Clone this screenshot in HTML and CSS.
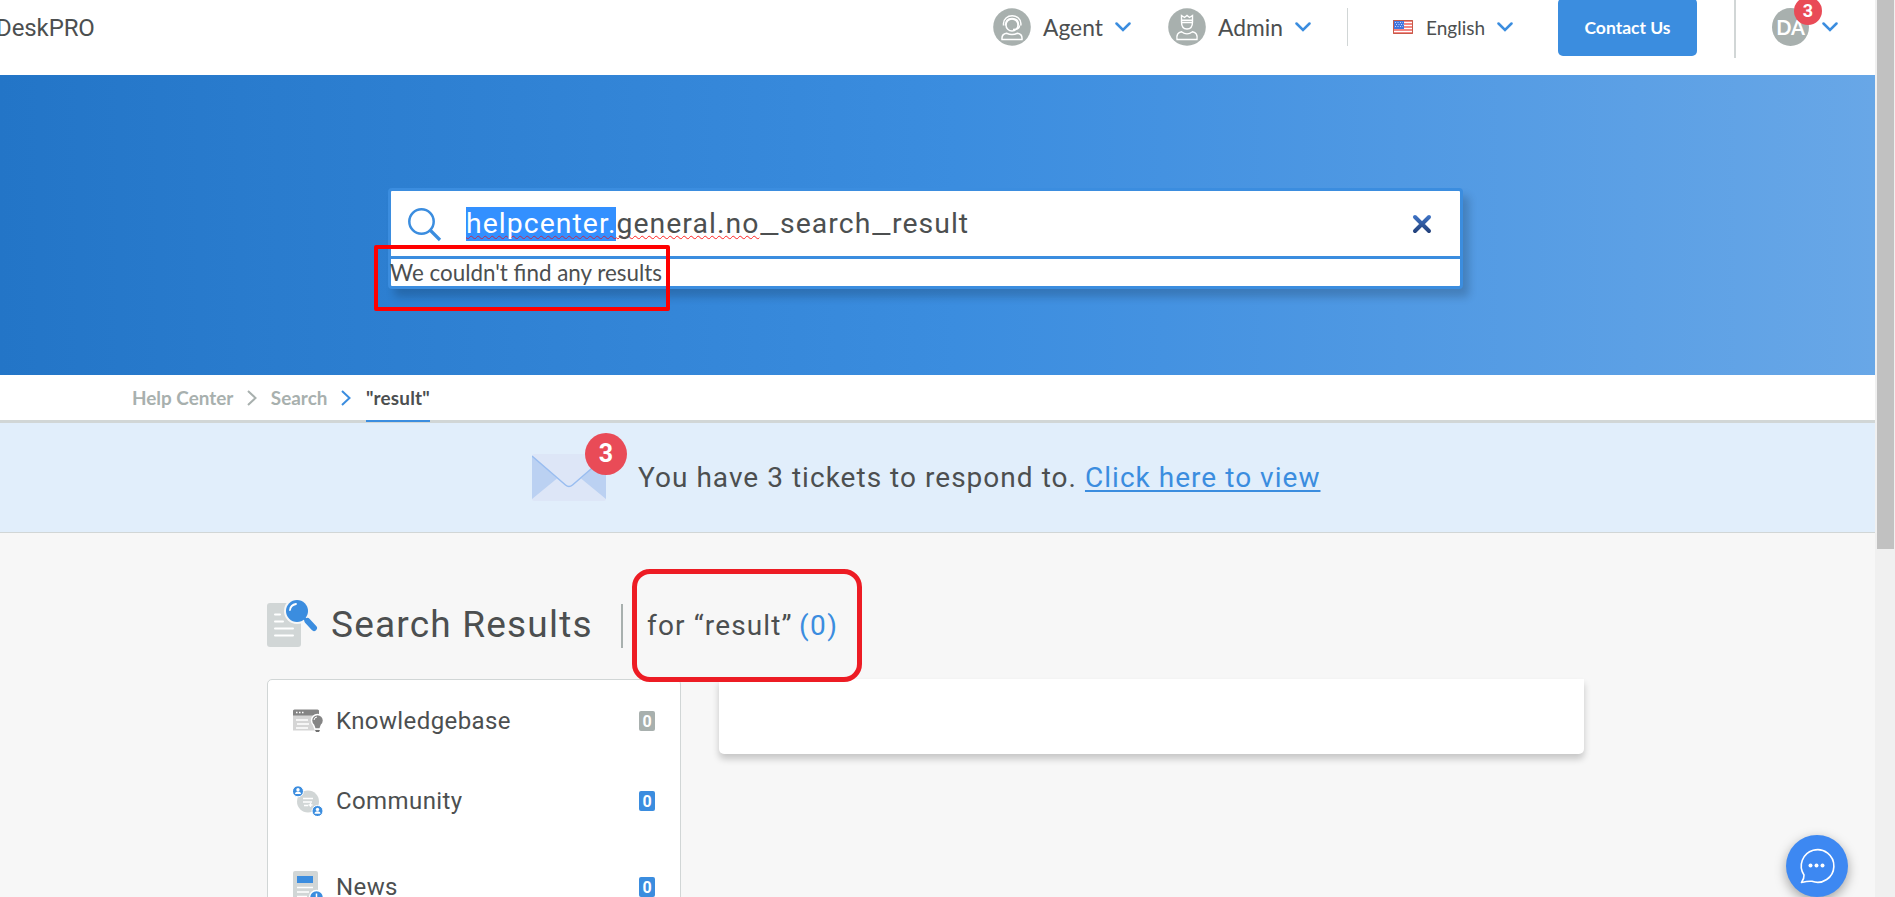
FILE: index.html
```html
<!DOCTYPE html>
<html lang="en">
<head>
<meta charset="utf-8">
<title>DeskPRO Help Center</title>
<link rel="stylesheet" href="styles.css">
</head>
<body>
<div class="page">
  <header class="header">
    <div class="brand">DeskPRO</div>
    <nav class="nav">
      <div class="nav-item agent">
        <svg class="avatar" viewBox="0 0 38 38"><circle cx="19" cy="19" r="18.8" fill="#a8b0ae"/><g fill="none" stroke="#fff" stroke-width="1.500"><circle cx="19" cy="17" r="6"/><path d="M10.500 17.500v-2a8.700 7.700 0 0 1 17.400 0v2M12.500 17.500q0-7 6.500-7t6.500 7M26.500 17.500q0 4-6.500 4"/><path d="M9 31.500q-.5-5.500 4.500-6.200q5.500 2.500 11 0q5 .7 4.500 6.200z"/></g></svg>
        <span>Agent</span>
        <svg class="chev" viewBox="0 0 16 10"><path d="M1.500 1.500L8 8L14.500 1.500"/></svg>
      </div>
      <div class="nav-item admin">
        <svg class="avatar" viewBox="0 0 38 38"><circle cx="19" cy="19" r="18.8" fill="#a8b0ae"/><g fill="none" stroke="#fff" stroke-width="1.400"><path d="M13.500 7.500V14q0 7 5.500 7t5.500-7V7.500l-3 2l-2.500-2l-2.500 2zM13.500 12.200h11M13.500 14.500h11"/><path d="M9 31.500q-1-6.800 4.500-7.700q5.500 4.200 11 0q5.500.9 4.500 7.700z"/></g></svg>
        <span>Admin</span>
        <svg class="chev" viewBox="0 0 16 10"><path d="M1.500 1.500L8 8L14.500 1.500"/></svg>
      </div>
      <div class="rule short"></div>
      <div class="nav-item lang">
        <svg class="flag" viewBox="0 0 20 14"><path fill="#fff" d="M0 0h20v14H0z"/><path stroke="#f0605c" stroke-width="1.500" d="M0 1h20M0 4h20M0 7h20M0 10h20M0 13h20"/><path fill="#4276df" d="M0 0h11v9H0z"/><path stroke="#c5d6fb" stroke-dasharray="1 1.500" d="M2 2.500h8M3 4.500h8M2 6.500h8"/><path fill="none" stroke="#c65b49" d="M.5.5h19v13H.5z"/></svg>
        <span>English</span>
        <svg class="chev" viewBox="0 0 16 10"><path d="M1.500 1.500L8 8L14.500 1.500"/></svg>
      </div>
      <div class="contact">Contact Us</div>
      <div class="rule tall"></div>
      <div class="user">
        <div class="initials">DA<span class="badge">3</span></div>
        <svg class="chev" viewBox="0 0 16 10"><path d="M1.500 1.500L8 8L14.500 1.500"/></svg>
      </div>
    </nav>
  </header>

  <section class="hero">
    <div class="search">
      <div class="search-row">
        <svg class="lens" viewBox="0 0 36 36"><g fill="none" stroke="#3b8ddf" stroke-width="2.500"><circle cx="14.500" cy="14.500" r="12.200"/><path stroke-width="3.200" d="M23.500 23.500L33 33"/></g></svg>
        <div class="query"><span class="typo"><span class="sel">helpcenter.</span>general.no</span><span class="under">_</span>search<span class="under">_</span>result</div>
        <svg class="clear" viewBox="0 0 20 20"><defs><linearGradient id="cg" gradientUnits="userSpaceOnUse" x1="0" y1="0" x2="0" y2="20"><stop offset="0" stop-color="#4178cc"/><stop offset="1" stop-color="#203c74"/></linearGradient></defs><path d="M3 3L17 17M17 3L3 17" stroke="url(#cg)" stroke-width="4" stroke-linecap="round"/></svg>
      </div>
      <div class="message">We couldn't find any results</div>
      <div class="mark-box"></div>
    </div>
  </section>

  <nav class="crumbs">
    <span>Help Center</span>
    <svg viewBox="0 0 10 16"><path d="M1 1L8.500 8L1 15" stroke="#a8b0ae"/></svg>
    <span>Search</span>
    <svg viewBox="0 0 10 16"><path d="M1 1L8.500 8L1 15" stroke="#3b8ddf"/></svg>
    <span class="current">"result"</span>
  </nav>

  <section class="alert">
    <div class="mail">
      <svg viewBox="0 0 74 47"><rect width="74" height="47" rx="2" fill="#dde6f7"/><path fill="#bbd1f2" d="M0 2L25 24.500L0 45zM74 2L49 24.500L74 45z"/><path fill="none" stroke="#99bdf0" stroke-width="1.500" d="M0 2L33.500 31Q37 34 40.500 31L74 2"/></svg>
      <span class="badge big">3</span>
    </div>
    <div class="alert-text">You have 3 tickets to respond to. <a>Click here to view</a></div>
  </section>

  <main class="main">
    <div class="title">
      <svg class="title-icon" viewBox="0 0 51 48"><rect y="3" width="34" height="44" rx="3" fill="#d1d6d6"/><path stroke="#fff" stroke-width="2" stroke-linecap="round" d="M8 14.500h5M8 21.500h8M8 28.500h18M8 35.500h18"/><circle cx="30" cy="11" r="13" fill="#f7f7f7"/><path stroke="#3b8ddf" stroke-width="3" d="M35 16L41 22"/><path stroke="#3b8ddf" stroke-width="6" stroke-linecap="round" d="M40.500 21L47 28"/><circle cx="30" cy="11" r="11" fill="#3b8ddf"/><path fill="none" stroke="#fff" stroke-width="1.800" stroke-linecap="round" d="M23 10Q23.500 5 29 4"/></svg>
      <h1>Search Results</h1>
      <div class="title-rule"></div>
      <div class="for"><span class="term">for “result”</span><span class="num">(0)</span><div class="mark-round"></div></div>
    </div>
    <div class="columns">
      <aside class="side">
        <div class="row kb">
          <svg viewBox="0 0 30 30"><path fill="#d5d5d5" d="M0 4h26v20.500H0z"/><path fill="#858585" d="M1.500 3.500h23Q26 3.500 26 5v4.500H0V5q0-1.500 1.500-1.500z"/><path stroke="#fff" stroke-width="1.500" stroke-dasharray="1.500 1.500" d="M3 6.500h8"/><path stroke="#fff" stroke-width="1.400" d="M3 14h12M4 18h12M3 22h12"/><path fill="#858585" stroke="#fff" stroke-width="1.500" d="M24.500 8.500a6 6 0 0 1 6 6q0 2.500-2 4.500l-1.500 4h-5l-1.500-4q-2-2-2-4.500a6 6 0 0 1 6-6z"/><path fill="#707070" d="M22 24h5l-1 2h-3z"/><path stroke="#fff" fill="none" d="M21 14q.5-3 3-3"/></svg>
          <span class="label">Knowledgebase</span><span class="count gray">0</span>
        </div>
        <div class="row com">
          <svg viewBox="0 0 30 30"><circle cx="15" cy="15.500" r="11" fill="#d1d6d6"/><path stroke="#fff" stroke-width="1.300" d="M10 12.500h10M10 16h9M11 19.500h4M15.500 19h4M17.500 17v4"/><circle cx="5" cy="5.300" r="5.500" fill="#3b8ddf" stroke="#fff"/><circle cx="24.500" cy="25" r="5.500" fill="#3b8ddf" stroke="#fff"/><g fill="#fff"><circle cx="5" cy="3.700" r="1.700"/><path d="M2 8q0-2.500 3-2.500t3 2.500z"/><circle cx="24.500" cy="23.400" r="1.700"/><path d="M21.500 27.700q0-2.500 3-2.500t3 2.500z"/></g></svg>
          <span class="label">Community</span><span class="count">0</span>
        </div>
        <div class="row news">
          <svg viewBox="0 0 30 36"><rect width="25" height="35" rx="2" fill="#d1d6d6"/><path fill="#3b8ddf" d="M4 5h16v7H4z"/><path stroke="#fff" stroke-width="1.600" d="M4 16.500h16M4 21h12M4 25.500h10"/><circle cx="23.500" cy="26.500" r="7" fill="#3b8ddf" stroke="#fff" stroke-width="1.500"/><path stroke="#fff" stroke-width="1.500" d="M23.500 22.500v5"/></svg>
          <span class="label">News</span><span class="count">0</span>
        </div>
      </aside>
      <section class="card"></section>
    </div>
  </main>

  <div class="chat">
    <svg viewBox="0 0 62 62"><path fill="none" stroke="#fff" stroke-width="1.600" stroke-linejoin="round" d="M18 40A16.300 16.300 0 1 1 26 46.300Q22.500 45.800 15.500 47.500Q18.300 43.500 18 40z"/><g fill="#fff"><circle cx="24.500" cy="30.500" r="2"/><circle cx="30.500" cy="30.500" r="2"/><circle cx="36.500" cy="30.500" r="2"/></g></svg>
  </div>
</div>
<div class="scrollbar"><div class="thumb"></div></div>
</body>
</html>
```
FILE: styles.css
```css
* { box-sizing: border-box; }
html { overflow: hidden; }
body {
  margin: 0;
  width: 1895px;
  height: 897px;
  display: flex;
  overflow: hidden;
  background: #f7f7f7;
  color: #4c4f50;
  font-family: Roboto, sans-serif;
}
svg { display: block; flex: none; }
.page { position: relative; width: 1875px; height: 897px; overflow: hidden; flex: none; white-space: nowrap; }
.scrollbar { width: 20px; height: 897px; background: #f0f0f0; padding: 0 1px 0 2px; }
.thumb { height: 549px; background: #c1c1c1; }

.header { height: 75px; background: #fff; display: flex; justify-content: space-between; }
.brand { height: 56px; line-height: 56px; font-size: 24px; letter-spacing: -0.1px; margin-left: -4px; }
.nav { height: 54px; display: flex; align-items: center; font-family: Lato, sans-serif; font-size: 22.8px; }
.nav-item { display: flex; align-items: center; }
.avatar { width: 38px; height: 38px; margin-right: 12px; }
.chev { width: 16px; height: 10px; margin-left: auto; }
.chev path { fill: none; stroke: #3b8ddf; stroke-width: 2.5; stroke-linecap: round; }
.agent { width: 138px; margin-right: 37px; }
.admin { width: 143px; margin-right: 36px; }
.rule { background: #d1d6d6; flex: none; }
.short { width: 1px; height: 38px; }
.tall { width: 2px; height: 62px; margin-left: 37px; }
.lang { width: 120px; margin-left: 45px; font-size: 19px; }
.flag { width: 20px; height: 14px; margin-right: 13px; }
.contact {
  width: 139px; height: 58px; line-height: 59px; margin-left: 45px; flex: none;
  background: #3b8ddf; color: #fff; border-radius: 5px; text-align: center;
  font-size: 17.5px; font-weight: 700;
}
.user { display: flex; align-items: center; width: 66px; margin: 0 37px 0 36px; }
.initials {
  position: relative; width: 37px; height: 38px; line-height: 38px; border-radius: 50%;
  background: #a8b0ae; color: #fff; font-size: 20px; font-weight: 700; text-align: center;
}
.badge {
  position: absolute; left: 22px; top: -11px; width: 28px; height: 28px; line-height: 28px;
  border-radius: 50%; background: #e94b57; color: #fff; text-align: center;
  font-family: Roboto, sans-serif; font-size: 18px; font-weight: 700;
}

.hero {
  height: 300px; padding: 113px 0 0 388px;
  background: linear-gradient(90deg, #2375c7 0%, #3b8ddf 51%, #4492e1 62%, #68a7e7 100%);
}
.search {
  position: relative; width: 1075px; height: 101px; background: #fff;
  border: 3px solid #3b8ddf; border-radius: 4px; box-shadow: 6px 8px 8px rgba(0, 0, 0, 0.18);
}
.search-row { height: 68px; border-bottom: 3px solid #3b8ddf; display: flex; align-items: center; }
.lens { width: 36px; height: 36px; margin: 2px 23px 0 16px; }
.query { font-size: 28.4px; letter-spacing: 1.05px; line-height: 34px; }
.typo { text-decoration: underline wavy #f22 1px; text-underline-offset: 2px; text-decoration-skip-ink: none; }
.sel { display: inline-block; background: #3390ff; color: #fff; text-decoration: underline wavy #c22a50 1px; text-underline-offset: 2px; text-decoration-skip-ink: none; }
.under { display: inline-block; transform: scaleX(1.42); transform-origin: center; margin: 0 3.8px 0 4px; letter-spacing: 0; }
.clear { width: 20px; height: 20px; margin: 0 28px 0 auto; }
.message { margin-left: -1px; font-family: Lato, sans-serif; font-size: 22.4px; line-height: 27px; }
.mark-box { position: absolute; left: -17px; top: 54px; width: 296px; height: 66px; border: 4px solid #f00; border-radius: 2px; }

.crumbs {
  height: 48px; padding-left: 132px; background: #fff; border-bottom: 3px solid #d1d6d6;
  display: flex; align-items: center; font: 700 18.9px Lato, sans-serif; color: #a8b0ae;
}
.crumbs svg { width: 10px; height: 16px; margin: 0 14px 0 13.500px; }
.crumbs path { fill: none; stroke-width: 2; }
.current { position: relative; height: 47px; line-height: 45px; margin: 0 0 -2px 1px; border-bottom: 2px solid #3b8ddf; color: #4c4f50; letter-spacing: 0.2px; }

.alert { height: 110px; padding: 0 0 0 532px; background: #e1eefb; border-bottom: 1px solid #d1d6d6; display: flex; align-items: center; }
.mail { position: relative; width: 74px; height: 47px; margin-right: 32px; }
.mail svg { width: 74px; height: 47px; }
.big { left: 53px; top: -21px; width: 42px; height: 42px; line-height: 42px; font-size: 25px; }
.alert-text { font-size: 28px; letter-spacing: 1.03px; }
.alert-text a { color: #3b8ddf; text-decoration: underline 2px; text-underline-offset: 3px; }

.main { padding: 66px 0 0 267px; }
.title { height: 80px; display: flex; align-items: flex-start; }
.title-icon { width: 51px; height: 48px; margin: 1px 13px 0 0; }
h1 { width: 290px; margin: 0; font-size: 37px; font-weight: 400; line-height: 52px; letter-spacing: 1.2px; }
.title-rule { width: 2px; height: 44px; margin: 5px 24px 0 0; background: #a8b0ae; }
.for { position: relative; display: flex; font-size: 28px; line-height: 53px; }
.term { width: 152px; letter-spacing: 1.15px; }
.num { color: #3b8ddf; letter-spacing: 1.5px; }
.mark-round { position: absolute; left: -15px; top: -30px; width: 230px; height: 113px; border: 5px solid #ed1c24; border-radius: 18px; }
.columns { display: flex; align-items: flex-start; }
.side { width: 414px; height: 260px; background: #fff; border: 1px solid #d1d6d6; border-radius: 5px; padding: 24px 25px 0; display: flex; flex-direction: column; }
.row { display: flex; height: 34px; align-items: center; font-size: 24px; }
.row svg { width: 30px; height: 30px; margin-right: 13px; }
.com { margin-top: 46px; }
.news { margin-top: 52px; }
.news svg { height: 36px; margin-top: 4px; }
.label { letter-spacing: 0.4px; }
.count { margin-left: auto; width: 16px; height: 20px; line-height: 21px; border-radius: 2px; background: #3b8ddf; color: #fff; font-size: 16px; font-weight: 700; text-align: center; }
.gray { background: #a8b0ae; }
.card { width: 865px; height: 75px; margin-left: 38px; background: #fff; border-radius: 0 0 5px 5px; box-shadow: 0 5px 7px rgba(0, 0, 0, 0.2); }
.chat { position: absolute; left: 1786px; top: 835px; width: 62px; height: 62px; border-radius: 50%; background: #3d88f2; box-shadow: 0 4px 12px rgba(0, 0, 0, 0.35); }
```
